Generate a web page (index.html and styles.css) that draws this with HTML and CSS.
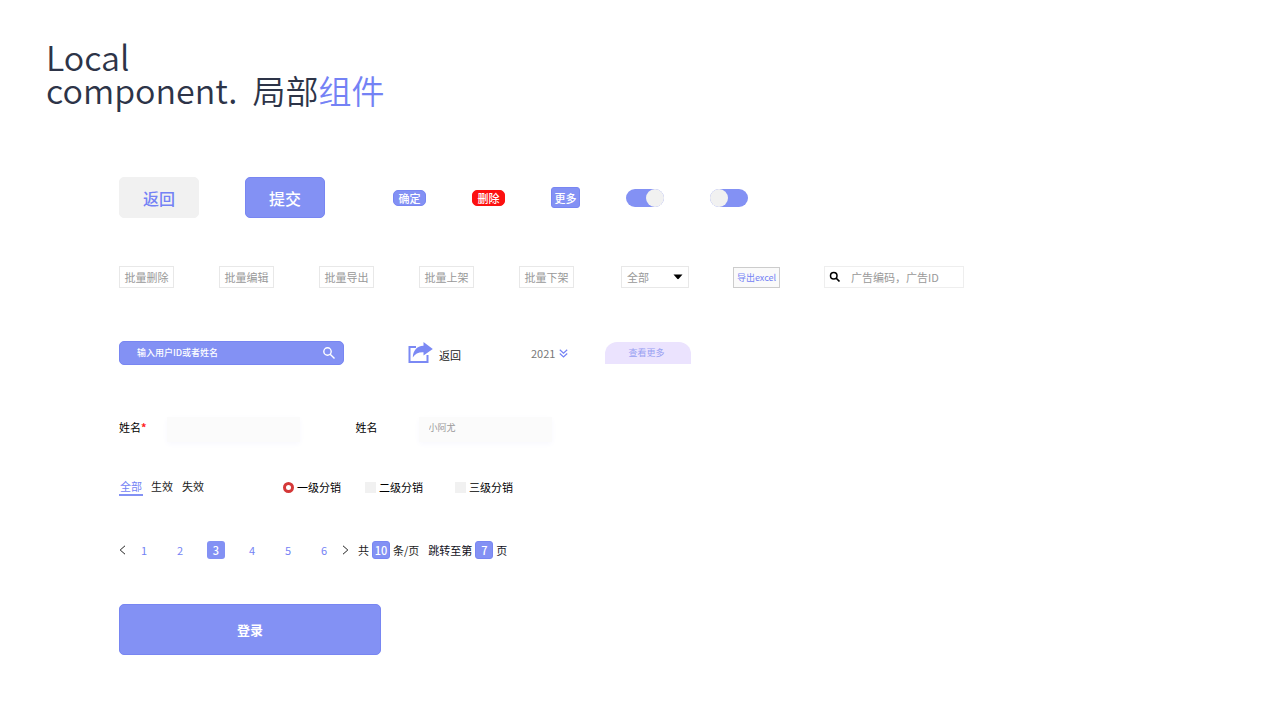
FILE: index.html
```html
<!DOCTYPE html>
<html lang="zh-CN">

<head>
  <meta charset="UTF-8">
  <meta name="viewport" content="width=device-width, initial-scale=1.0">
  <title>Local component. 局部组件</title>
  <link rel="stylesheet" href="styles.css">
</head>

<body>
  <header class="page-header">
    <h1>Local<br>component.&nbsp; <span class="cn">局部<span class="accent">组件</span></span></h1>
  </header>

  <main class="components">
    <!-- Buttons and switches -->
    <section class="row row-buttons">
      <div class="group">
        <button type="button" class="btn btn-large btn-plain">返回</button>
        <button type="button" class="btn btn-large">提交</button>
      </div>
      <div class="group">
        <button type="button" class="btn btn-tag">确定</button>
        <button type="button" class="btn btn-tag btn-danger">删除</button>
        <button type="button" class="btn btn-more">更多</button>
        <input type="checkbox" class="switch" aria-label="开关一" checked>
        <input type="checkbox" class="switch" aria-label="开关二">
      </div>
    </section>

    <!-- Batch toolbar -->
    <section class="row row-toolbar">
      <div class="group">
        <button type="button" class="btn-outline">批量删除</button>
        <button type="button" class="btn-outline">批量编辑</button>
        <button type="button" class="btn-outline">批量导出</button>
        <button type="button" class="btn-outline">批量上架</button>
        <button type="button" class="btn-outline">批量下架</button>
      </div>
      <div class="group">
        <div class="select-box">
          <select aria-label="筛选">
            <option>全部</option>
          </select>
          <svg class="caret" viewBox="0 0 10 6"><path d="M0.500 0.500H9.500L5.800 4.800Q5 5.500 4.200 4.800Z" fill="#000" /></svg>
        </div>
        <button type="button" class="btn-export">导出excel</button>
        <div class="ad-search">
          <svg viewBox="0 0 24 24"><circle cx="9.500" cy="9.500" r="6.500" fill="none" stroke="#000" stroke-width="3" /><path d="M14 14L21 21" stroke="#000" stroke-width="3.500" /></svg>
          <input type="text" aria-label="广告搜索" placeholder="广告编码，广告ID">
        </div>
      </div>
    </section>

    <!-- Search, back link, year, more -->
    <section class="row row-search">
      <div class="user-search">
        <input type="text" aria-label="用户搜索" placeholder="输入用户ID或者姓名">
        <button type="button" aria-label="搜索">
          <svg viewBox="0 0 12 12" fill="none" stroke="#fff" stroke-width="1.400"><circle cx="4.500" cy="4.500" r="3.700" /><path d="M7.200 7.200L11.500 11.500" /></svg>
        </button>
      </div>
      <a href="#" class="back-link">
        <svg viewBox="0 0 25 22"><path d="M8 5H1.500V20H19.500V13" fill="none" stroke="#7b89f4" stroke-width="2" /><path d="M15.500 0L24.800 7L15.500 13.500V10.200C10.500 10 7 11.800 4.800 15.500C5.200 8.800 8.500 4.200 15.500 3.800Z" fill="#7b89f4" /></svg>
        <span>返回</span>
      </a>
      <button type="button" class="year">
        <span>2021</span>
        <svg viewBox="0 0 9 9" fill="none" stroke="#7482f5" stroke-width="1.200"><path d="M0.800 0.800L4.500 4.200L8.200 0.800M0.800 4.500L4.500 7.900L8.200 4.500" /></svg>
      </button>
      <button type="button" class="see-more">查看更多</button>
    </section>

    <!-- Form fields -->
    <section class="row row-form">
      <div class="field">
        <label for="name">姓名<span class="required">*</span></label>
        <input type="text" id="name">
      </div>
      <div class="field">
        <label for="nickname">姓名</label>
        <input type="text" id="nickname" placeholder="小阿尤">
      </div>
    </section>

    <!-- Tabs and levels -->
    <section class="row row-filter">
      <nav class="tabs">
        <a href="#" class="active">全部</a>
        <a href="#">生效</a>
        <a href="#">失效</a>
      </nav>
      <div class="levels">
        <label><input type="radio" name="level" checked>一级分销</label>
        <label><input type="radio" name="level">二级分销</label>
        <label><input type="radio" name="level">三级分销</label>
      </div>
    </section>

    <!-- Pagination -->
    <section class="row row-pages">
      <nav class="pages">
        <a href="#" class="arrow" aria-label="上一页"><svg viewBox="0 0 7 10"><path d="M6 0.800L1.200 5L6 9.200" /></svg></a>
        <a href="#">1</a>
        <a href="#">2</a>
        <a href="#" class="current">3</a>
        <a href="#">4</a>
        <a href="#">5</a>
        <a href="#">6</a>
        <a href="#" class="arrow" aria-label="下一页"><svg viewBox="0 0 7 10"><path d="M1 0.800L5.800 5L1 9.200" /></svg></a>
      </nav>
      <label class="page-field">共<input type="text" value="10">条/页</label>
      <label class="page-field jump">跳转至第<input type="text" value="7">页</label>
    </section>

    <button type="button" class="btn btn-login">登录</button>
  </main>
</body>

</html>
```
FILE: styles.css
```css
/* styles.css */
* {
  box-sizing: border-box;
}

body {
  margin: 0;
  padding: 40px 46px;
  font-family: "Noto Sans CJK SC", sans-serif;
  font-size: 11px;
  line-height: 16px;
  color: #222;
  background: #fff;
}

button,
input,
select {
  margin: 0;
  padding: 0;
  border: none;
  background: none;
  font: inherit;
  color: inherit;
}

button {
  cursor: pointer;
}

a {
  color: inherit;
  text-decoration: none;
}

svg {
  display: block;
}

h1 {
  margin: 0;
  font-size: 34px;
  font-weight: 350;
  line-height: 33px;
  color: #2d3448;
}

.cn {
  font-size: 33px;
}

.accent {
  color: #7482f5;
}

.components {
  padding: 70px 73px 0;
}

.row {
  display: flex;
  align-items: center;
}

.group {
  display: flex;
  align-items: center;
  gap: 46px;
}

/* Buttons */
.btn {
  border: 1px solid #7886f2;
  border-radius: 5px;
  background: #8391f4;
  color: #fff;
}

.btn-large {
  width: 80px;
  height: 41px;
  font-size: 16px;
  font-weight: 500;
}

.btn-plain {
  border-color: #f1f1f1;
  background: #f1f1f1;
  color: #7482f5;
}

.btn-tag {
  width: 33px;
  height: 16px;
  line-height: 14px;
  font-weight: 500;
}

.btn-danger {
  border-color: #fc1010;
  background: #fc1010;
}

.btn-more {
  width: 29px;
  height: 21px;
  border-radius: 3px;
  font-weight: 500;
}

.switch {
  appearance: none;
  display: flex;
  width: 38px;
  height: 18px;
  border-radius: 9px;
  background: #8391f4;
}

.switch::before {
  content: "";
  width: 18px;
  height: 18px;
  border-radius: 50%;
  background: #f1f1f1;
}

.switch:checked {
  justify-content: flex-end;
}

.row-buttons {
  gap: 68px;
  margin-bottom: 48px;
}

/* Toolbar */
.row-toolbar {
  gap: 47px;
  margin-bottom: 53px;
  color: #999;
}

.row-toolbar .group {
  gap: 45px;
}

.row-toolbar .group:last-child {
  gap: 44px;
}

.btn-outline {
  width: 55px;
  height: 22px;
  border: 1px solid #e8e8e8;
}

.select-box {
  display: flex;
  align-items: center;
  width: 68px;
  height: 22px;
  padding: 0 5px;
  border: 1px solid #e8e8e8;
}

.select-box select {
  flex: 1;
  appearance: none;
}

.caret {
  width: 10px;
  height: 6px;
  pointer-events: none;
}

.btn-export {
  width: 47px;
  height: 21px;
  padding-top: 2px;
  border: 1px solid #ccc;
  background: #fafafa;
  font-size: 9px;
  white-space: nowrap;
  color: #7482f5;
}

.ad-search {
  display: flex;
  align-items: center;
  gap: 10px;
  width: 140px;
  height: 22px;
  padding-left: 4px;
  border: 1px solid #eee;
}

.ad-search svg {
  width: 12px;
  height: 12px;
}

.ad-search input {
  flex: 1;
  min-width: 0;
}

input::placeholder {
  color: #999;
  opacity: 1;
}

/* Search row */
.row-search {
  margin-bottom: 52px;
}

.user-search {
  display: flex;
  align-items: center;
  width: 225px;
  height: 24px;
  margin-right: 64px;
  padding: 0 8px 0 17px;
  border: 1px solid #7886f2;
  border-radius: 5px;
  background: #8391f4;
  color: #fff;
}

.user-search input {
  flex: 1;
  min-width: 0;
  font-size: 9px;
  font-weight: 500;
}

.user-search input::placeholder {
  color: #fff;
}

.user-search svg {
  width: 12px;
  height: 12px;
}

.back-link {
  display: flex;
  align-items: flex-end;
  gap: 6px;
  margin-right: 70px;
}

.back-link svg {
  width: 25px;
  height: 22px;
}

.back-link span {
  line-height: 18px;
}

.year {
  display: flex;
  align-items: center;
  gap: 4px;
  margin-right: 37px;
  color: #777;
}

.year svg {
  width: 9px;
  height: 9px;
}

.see-more {
  width: 86px;
  height: 22px;
  padding-right: 4px;
  border-radius: 12px 12px 0 0;
  background: #ebe3fe;
  font-size: 9px;
  color: #98a0f2;
}

/* Form */
.row-form {
  gap: 56px;
  margin-bottom: 36px;
}

.field {
  display: flex;
  align-items: flex-start;
  gap: 20px;
  color: #000;
}

.field + .field {
  gap: 41px;
}

.field label {
  line-height: 20px;
}

.required {
  font-weight: 700;
  color: #f22;
}

.field input {
  width: 133px;
  height: 25px;
  padding: 0 10px 4px;
  background: #fbfbfb;
  box-shadow: 0 2px 6px #f8f8fe;
  font-size: 9px;
}

/* Tabs */
.row-filter {
  gap: 78px;
  margin-bottom: 45px;
}

.tabs {
  display: flex;
  gap: 7px;
}

.tabs a {
  padding: 0 1px;
  border-bottom: 2px solid transparent;
}

.tabs .active {
  border-color: #8391f4;
  color: #7482f5;
}

.levels {
  display: flex;
  gap: 24px;
  color: #000;
}

.levels label {
  display: flex;
  align-items: center;
  gap: 3px;
}

.levels label:last-child {
  margin-left: 8px;
}

.levels input {
  appearance: none;
  width: 11px;
  height: 11px;
  background: #f1f1f1;
}

.levels input:checked {
  border: 3px solid #d43838;
  border-radius: 50%;
  background: #fff;
}

/* Pagination */
.row-pages {
  gap: 9px;
  margin-bottom: 45px;
}

.pages {
  display: flex;
  align-items: center;
  gap: 18px;
}

.pages a {
  width: 18px;
  line-height: 18px;
  text-align: center;
  color: #7482f5;
}

.pages .current {
  border-radius: 3px;
  background: #8391f4;
  color: #fff;
  font-weight: 500;
}

.pages .arrow {
  width: 7px;
  margin: 0 -9px 0 0;
}

.pages .arrow:last-child {
  margin: 0 0 0 -9px;
}

.arrow svg {
  width: 7px;
  height: 10px;
  fill: none;
  stroke: #222;
}

.page-field {
  display: flex;
  align-items: center;
  gap: 3px;
}

.page-field input {
  width: 18px;
  height: 18px;
  border: 1px solid #7886f2;
  border-radius: 3px;
  background: #8391f4;
  color: #fff;
  font-weight: 500;
  text-align: center;
}

.jump {
  color: #112;
}

.btn-login {
  width: 262px;
  height: 51px;
  font-size: 13px;
  font-weight: 700;
}
```
